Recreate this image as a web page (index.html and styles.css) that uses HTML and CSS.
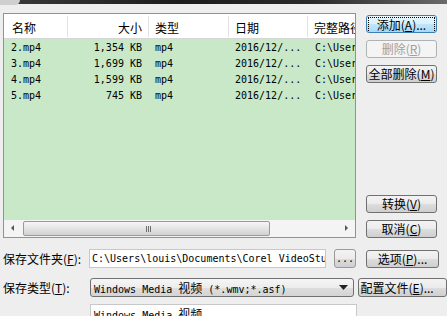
FILE: index.html
```html
<!DOCTYPE html>
<html lang="zh-CN">
<head>
    <meta charset="UTF-8">
    <title>转换</title>
    <link rel="stylesheet" href="styles.css">
</head>
<body>
    <!-- Window frame edge -->
    <div class="titlebar"><span class="corner"></span></div>

    <div class="dialog">
        <!-- File list and main buttons -->
        <div class="main">
            <div class="listview">
                <div class="lv-header">
                    <div class="col">名称</div>
                    <div class="col right">大小</div>
                    <div class="col">类型</div>
                    <div class="col">日期</div>
                    <div class="col">完整路径</div>
                </div>
                <div class="lv-body">
                    <div class="lv-row"><span>2.mp4</span><span class="right">1,354 KB</span><span>mp4</span><span>2016/12/...</span><span>C:\Users\louis</span></div>
                    <div class="lv-row"><span>3.mp4</span><span class="right">1,699 KB</span><span>mp4</span><span>2016/12/...</span><span>C:\Users\louis</span></div>
                    <div class="lv-row"><span>4.mp4</span><span class="right">1,599 KB</span><span>mp4</span><span>2016/12/...</span><span>C:\Users\louis</span></div>
                    <div class="lv-row"><span>5.mp4</span><span class="right">745 KB</span><span>mp4</span><span>2016/12/...</span><span>C:\Users\louis</span></div>
                </div>
                <div class="hscroll">
                    <span class="arrow left"></span>
                    <span class="track"><span class="thumb"><span class="grip"></span></span></span>
                    <span class="arrow rightarrow"></span>
                </div>
            </div>

            <div class="actions">
                <button class="btn default"><span class="focus">添加(<u>A</u>)...</span></button>
                <button class="btn" disabled>删除(<u>R</u>)</button>
                <button class="btn">全部删除(<u>M</u>)</button>
                <div class="spacer"></div>
                <button class="btn">转换(<u>V</u>)</button>
                <button class="btn">取消(<u>C</u>)</button>
            </div>
        </div>

        <!-- Output folder -->
        <div class="row">
            <label class="label">保存文件夹(<u>F</u>):</label>
            <div class="textbox">C:\Users\louis\Documents\Corel VideoStudio</div>
            <button class="btn browse">...</button>
            <button class="btn options">选项(<u>P</u>)...</button>
        </div>

        <!-- Output type -->
        <div class="row">
            <label class="label">保存类型(<u>T</u>):</label>
            <div class="select">
                <span class="select-text">Windows Media <span class="cjk">视频</span> (*.wmv;*.asf)</span>
                <svg class="select-arrow" width="9" height="5" viewBox="0 0 9 5"><path d="M0 0H9L4.5 5Z" fill="#222"/></svg>
            </div>
            <button class="btn profile">配置文件(<u>E</u>)...</button>
        </div>

        <!-- Description box -->
        <div class="row">
            <div class="label"></div>
            <div class="desc">Windows Media <span class="cjk">视频</span></div>
        </div>
    </div>
</body>
</html>
```

FILE: styles.css
```css
/* Basic page setup */
body {
    margin: 0;
    background: #eeeeee;
    font-family: "Noto Sans CJK SC", sans-serif;
    font-size: 12px;
    color: #000;
    overflow: hidden;
}

u {
    text-decoration: underline;
}

/* Dark strip of the window frame */
.titlebar {
    height: 4px;
    background: linear-gradient(to right, #3a3a3a, #1c1c1c 40%, #2a2a2a 70%, #6a6a6a);
    position: relative;
}

.titlebar .corner {
    position: absolute;
    left: 0;
    top: 0;
    width: 20px;
    height: 5px;
    background: #cfcfcf;
    border-bottom-right-radius: 8px;
}

.dialog {
    padding-left: 3px;
}

/* Top section */
.main {
    display: flex;
    margin-top: 9px;
    height: 225px;
}

.listview {
    width: 351px;
    height: 223px;
    border: 1px solid #8f9297;
    background: #fff;
    display: flex;
    flex-direction: column;
    overflow: hidden;
}

.lv-header,
.lv-row {
    display: grid;
    grid-template-columns: 64px 81px 80px 79px 120px;
    white-space: nowrap;
}

.lv-header {
    height: 24px;
    border-bottom: 1px solid #d5d5d5;
    align-items: center;
}

.lv-header .col {
    padding: 3px 6px 0 8px;
    border-right: 1px solid #e2e2e2;
    height: 18px;
    line-height: 18px;
    overflow: hidden;
}

.lv-header .col:nth-child(n+3) {
    padding-left: 6px;
}

.right {
    text-align: right;
}

.lv-body {
    flex: 1;
    background: #c8e8c8;
    padding-top: 1px;
}

.lv-row {
    height: 16px;
    line-height: 16px;
    font-family: "DejaVu Sans Mono", "Noto Sans CJK SC", monospace;
    font-size: 10px;
}

.lv-row span {
    padding-left: 7px;
    overflow: hidden;
}

.lv-row span.right {
    padding-left: 0;
    padding-right: 7px;
}

.lv-row span:nth-child(3),
.lv-row span:nth-child(4) {
    padding-left: 6px;
}

/* Horizontal scroll bar */
.hscroll {
    height: 17px;
    display: flex;
    align-items: center;
    background: #f4f4f4;
}

.hscroll .arrow {
    width: 17px;
    height: 17px;
    position: relative;
}

.hscroll .arrow.left::after,
.hscroll .arrow.rightarrow::after {
    content: "";
    position: absolute;
    top: 5px;
    border-top: 3px solid transparent;
    border-bottom: 3px solid transparent;
}

.hscroll .arrow.left::after {
    left: 7px;
    border-right: 3px solid #555;
}

.hscroll .arrow.rightarrow::after {
    left: 7px;
    border-left: 3px solid #555;
}

.hscroll .track {
    flex: 1;
    height: 17px;
    display: flex;
    align-items: center;
    padding-left: 2px;
}

.hscroll .thumb {
    width: 245px;
    height: 13px;
    border: 1px solid #9a9a9a;
    border-radius: 2px;
    background: linear-gradient(#f6f6f6, #e4e4e4 50%, #d2d2d2);
    display: flex;
    align-items: center;
    justify-content: center;
}

.hscroll .grip {
    width: 6px;
    height: 6px;
    background: repeating-linear-gradient(to right, #6e6e6e 0 1px, transparent 1px 2px);
    margin-left: 4px;
}

/* Buttons column */
.actions {
    margin-left: 10px;
    width: 71px;
    display: flex;
    flex-direction: column;
    gap: 7px;
    padding-top: 2px;
}

.actions .spacer {
    flex: 1;
}

.btn {
    height: 18px;
    padding: 0;
    border: 1px solid #707070;
    border-radius: 3px;
    background: linear-gradient(#f3f3f3, #ebebeb 50%, #dddddd 51%, #cfcfcf);
    font-family: "Noto Sans CJK SC", sans-serif;
    font-size: 12px;
    line-height: 16px;
    color: #000;
    white-space: nowrap;
    overflow: hidden;
}

.btn.default {
    border-color: #3c7fb1;
    background: linear-gradient(#eaf6fd, #d9f0fc 50%, #bee6fd 51%, #a7d9f5);
    padding: 1px;
}

.btn.default .focus {
    display: block;
    height: 14px;
    line-height: 14px;
    border: 1px dotted #000;
}

.btn:disabled {
    border-color: #adb2b5;
    background: #f4f4f4;
    color: #a0a0a0;
}

/* Form rows */
.row {
    display: flex;
    align-items: center;
}

.row:nth-child(2) {
    margin-top: 11px;
}

.row:nth-child(3) {
    margin-top: 10px;
}

.row:nth-child(4) {
    margin-top: 7px;
    align-items: flex-start;
}

.label {
    width: 86px;
    flex-shrink: 0;
    white-space: nowrap;
}

.textbox {
    width: 233px;
    height: 17px;
    line-height: 17px;
    padding-left: 2px;
    border: 1px solid #c8c8c8;
    background: #fff;
    font-family: "DejaVu Sans Mono", monospace;
    font-size: 10px;
    white-space: nowrap;
    overflow: hidden;
}

.btn.browse {
    width: 22px;
    height: 19px;
    margin-left: 8px;
    font-family: "DejaVu Sans Mono", monospace;
    font-size: 10px;
    border-color: #9a9a9a;
}

.btn.options {
    width: 73px;
    margin-left: 10px;
}

.select {
    width: 264px;
    height: 17px;
    margin-left: 1px;
    border: 1px solid #707070;
    border-radius: 3px;
    background: linear-gradient(#f6f6f6, #ececec 50%, #dedede 51%, #d4d4d4);
    display: flex;
    align-items: center;
    justify-content: space-between;
    padding-left: 3px;
    padding-right: 0;
    box-sizing: content-box;
}

.select-text,
.desc {
    font-family: "DejaVu Sans Mono", monospace;
    font-size: 10px;
    white-space: nowrap;
}

.cjk {
    font-family: "Noto Sans CJK SC", sans-serif;
    font-size: 12px;
}

.select-arrow {
    margin-right: 5px;
}

.btn.profile {
    width: 90px;
    height: 19px;
    margin-left: 4px;
    text-align: left;
    padding-left: 1px;
}

.desc {
    width: 262px;
    height: 20px;
    margin-left: 1px;
    padding-left: 3px;
    border: 1px solid #c8c8c8;
    background: #fff;
    line-height: 18px;
}
```
